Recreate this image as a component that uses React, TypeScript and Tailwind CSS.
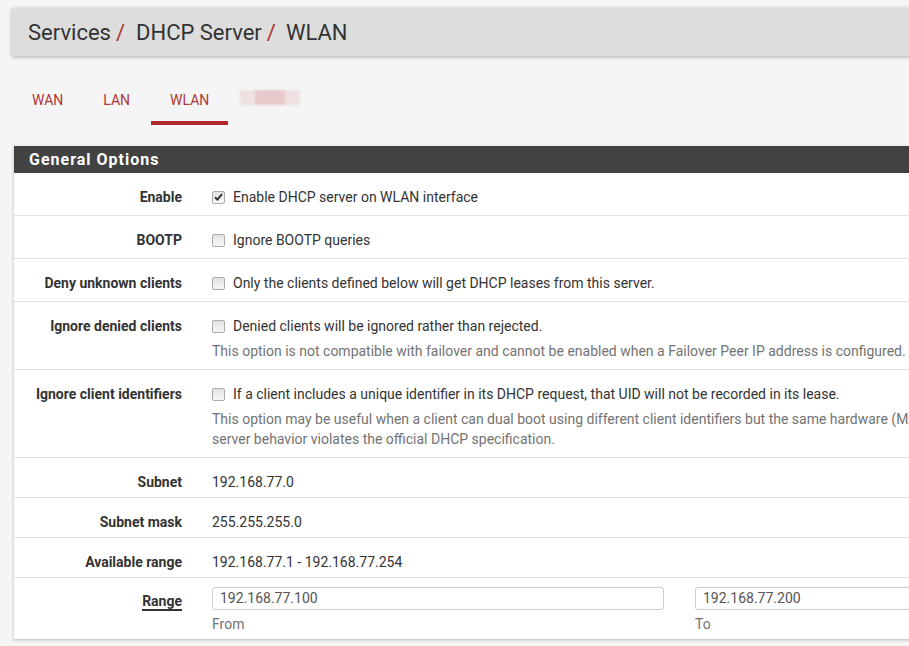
import React from 'react';

const font = { fontFamily: 'Roboto, "Liberation Sans", sans-serif' };

const Check = ({ checked }: { checked?: boolean }) => (
  <span className="inline-flex w-[13px] h-[13px] shrink-0 items-center justify-center rounded-[2px] border border-[#acacac] bg-gradient-to-b from-[#e2e2e2] to-[#f7f7f7]">
    {checked && (
      <svg width="9" height="8" viewBox="0 0 9 8">
        <path d="M1 4.2 L3.4 6.6 L8 1.2" fill="none" stroke="#333" strokeWidth="2" />
      </svg>
    )}
  </span>
);

const Row = ({ label, children, tight }: any) => (
  <div className={`flex border-b border-[#e3e3e3] ${tight ? 'pt-[14px] pb-[5px]' : 'pt-[14px] pb-[8px]'}`}>
    <div className="w-[168px] shrink-0 text-right font-bold text-[14px] leading-[20px] text-[#333]">{label}</div>
    <div className="pl-[30px] text-[14px] leading-[20px] text-[#333] whitespace-nowrap">{children}</div>
  </div>
);

const CheckLine = ({ checked, text }: { checked?: boolean; text: string }) => (
  <div className="flex items-center gap-[8px]">
    <Check checked={checked} />
    <span>{text}</span>
  </div>
);

const Help = ({ children }: any) => <div className="mt-[5px] text-[#737373]">{children}</div>;

export default function App() {
  const tabs = ['WAN', 'LAN', 'WLAN'];
  return (
    <div className="w-screen h-screen overflow-hidden bg-[#f5f5f5]" style={font}>
      <div className="w-[1300px] pt-[8px]">
        <div className="ml-[12px] h-[48px] bg-[#dddddd] shadow-[0_1px_4px_rgba(0,0,0,0.3)] flex items-center pl-[16px] text-[22px] text-[#333]">
          <span>Services</span>
          <span className="ml-[5px] mr-[11px] text-[#b33232]">/</span>
          <span>DHCP Server</span>
          <span className="ml-[5px] mr-[10px] text-[#b33232]">/</span>
          <span>WLAN</span>
        </div>

        <div className="mt-[22px] ml-[13px] flex gap-[2px] items-end">
          {tabs.map((t) => (
            <div
              key={t}
              className={`px-[19px] pt-[12px] pb-[11px] text-[14px] leading-[20px] text-[#b03535] border-b-4 ${
                t === 'WLAN' ? 'border-[#b0282a]' : 'border-transparent'
              }`}
            >
              {t}
            </div>
          ))}
          <div className="ml-[10px] mb-[20px] flex h-[15px] w-[60px] blur-[1px]">
            <div className="w-[15px] bg-[#efe0e1]" />
            <div className="w-[30px] bg-[#e6cacc]" />
            <div className="w-[15px] bg-[#efe0e1]" />
          </div>
        </div>

        <div className="mt-[21px] ml-[14px] bg-white shadow-[0_1px_3px_rgba(0,0,0,0.25)]">
          <div className="h-[27px] bg-[#424242] flex items-center pl-[15px] text-white font-bold text-[16px] tracking-[1px]">
            General Options
          </div>

          <Row label="Enable">
            <CheckLine checked text="Enable DHCP server on WLAN interface" />
          </Row>
          <Row label="BOOTP">
            <CheckLine text="Ignore BOOTP queries" />
          </Row>
          <Row label="Deny unknown clients">
            <CheckLine text="Only the clients defined below will get DHCP leases from this server." />
          </Row>
          <Row label="Ignore denied clients">
            <CheckLine text="Denied clients will be ignored rather than rejected." />
            <Help>This option is not compatible with failover and cannot be enabled when a Failover Peer IP address is configured.</Help>
          </Row>
          <Row label="Ignore client identifiers">
            <CheckLine text="If a client includes a unique identifier in its DHCP request, that UID will not be recorded in its lease." />
            <Help>
              <div>This option may be useful when a client can dual boot using different client identifiers but the same hardware (MAC) address. Note that the resulting</div>
              <div>server behavior violates the official DHCP specification.</div>
            </Help>
          </Row>
          <Row label="Subnet" tight>192.168.77.0</Row>
          <Row label="Subnet mask" tight>255.255.255.0</Row>
          <Row label="Available range" tight>192.168.77.1 - 192.168.77.254</Row>

          <div className="flex pt-[9px] pb-[5px]">
            <div className="w-[168px] shrink-0 pt-[4px] text-right font-bold text-[14px] leading-[20px] text-[#333]">
              <span className="border-b-2 border-[#333]">Range</span>
            </div>
            <div className="pl-[30px] flex gap-[31px] text-[14px]">
              <div className="w-[452px]">
                <div className="h-[23px] rounded-[3px] border border-[#cccccc] flex items-center px-[7px] text-[#555]">192.168.77.100</div>
                <div className="mt-[4px] leading-[20px] text-[#737373]">From</div>
              </div>
              <div className="w-[452px]">
                <div className="h-[23px] rounded-[3px] border border-[#cccccc] flex items-center px-[7px] text-[#555]">192.168.77.200</div>
                <div className="mt-[4px] leading-[20px] text-[#737373]">To</div>
              </div>
            </div>
          </div>
        </div>
      </div>
    </div>
  );
}
